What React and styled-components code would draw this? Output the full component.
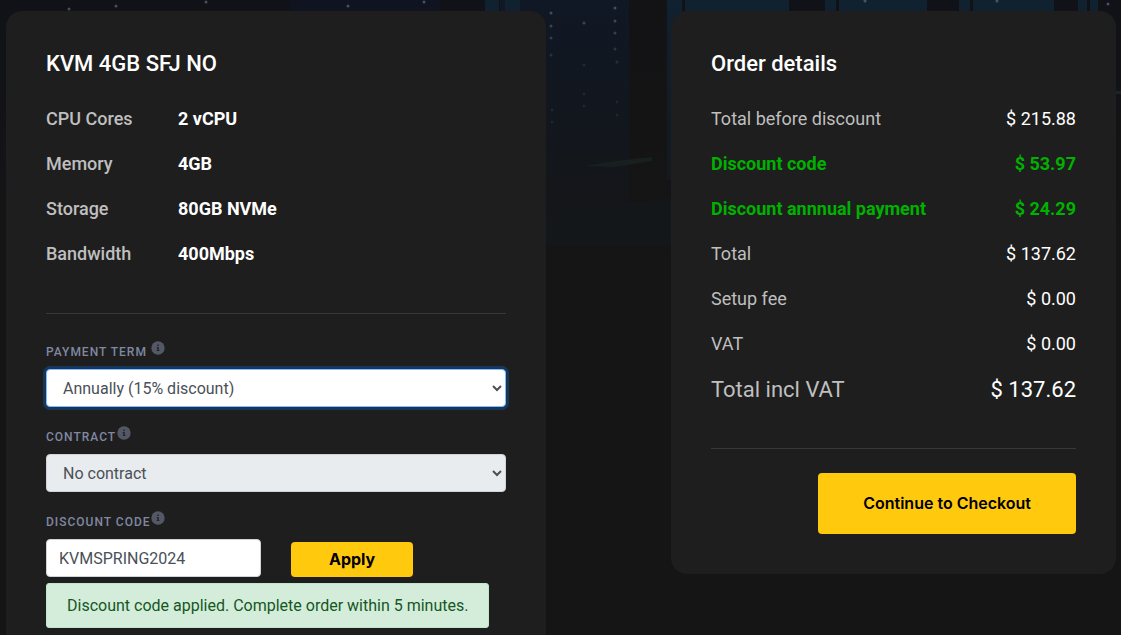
import React from "react";
import styled, { createGlobalStyle } from "styled-components";

const GlobalStyle = createGlobalStyle`
  *, *::before, *::after { box-sizing: border-box; }
  html, body, #root { min-height: 100vh; }
  body { margin: 0; background: #151515; font-family: Roboto, sans-serif; color: #fff; }
  button, input, select { font: inherit; }
`;

const Page = styled.div`
  position: relative;
  height: 100vh;
  overflow: hidden;
`;

const Backdrop = styled.svg`
  position: absolute;
  inset: 0;
  width: 100%;
  height: 100%;
`;

const Columns = styled.main`
  position: relative;
  display: grid;
  grid-template-columns: 540fr 445fr;
  column-gap: 125px;
  align-items: start;
  padding: 11px 5px 0 6px;
`;

const Panel = styled.section`
  background: #1e1e1e;
  border-radius: 16px;
  padding: 40px;
`;

const Title = styled.h2`
  margin: 0 0 30px;
  font-size: 22px;
  line-height: 26px;
  font-weight: 500;
`;

const SpecList = styled.dl`
  display: grid;
  grid-template-columns: 132px 1fr;
  row-gap: 21px;
  margin: 0;
  font-size: 18px;
  line-height: 24px;
`;

const SpecName = styled.dt`
  font-weight: 500;
  color: #bfbfbf;
`;

const SpecValue = styled.dd`
  margin: 0;
  font-weight: 700;
`;

const Divider = styled.hr`
  height: 1px;
  margin: ${(p) => p.$top}px 0 24px;
  border: 0;
  background: #383838;
`;

const Field = styled.div`
  display: flex;
  flex-direction: column;
  margin-bottom: 16px;
`;

const LabelRow = styled.div`
  display: flex;
  gap: ${(p) => p.$gap || 0}px;
  height: 31px;
`;

const Label = styled.label`
  padding-top: 4px;
  font-size: 12px;
  line-height: 20px;
  font-weight: 500;
  letter-spacing: 1px;
  text-transform: uppercase;
  color: #8088a2;
`;

const Info = styled.svg`
  width: 14px;
  height: 14px;
  margin-top: 3px;
`;

const Select = styled.select`
  height: 38px;
  padding: 0 0 0 12px;
  border: 1px solid ${(p) => (p.$active ? "#80bdff" : "#ced4da")};
  border-radius: 4px;
  background: ${(p) => (p.$active ? "#fff" : "#e9ecef")};
  box-shadow: ${(p) => (p.$active ? "0 0 0 3px #17365a" : "none")};
  color: #495057;
  font-size: 16px;
  opacity: 1;
`;

const CodeRow = styled.div`
  display: flex;
  align-items: flex-end;
  gap: 30px;
`;

const CodeInput = styled.input`
  width: 215px;
  height: 38px;
  padding: 0 12px;
  border: 1px solid #ced4da;
  border-radius: 4px;
  background: #fff;
  color: #495057;
  font-size: 16px;
`;

const Button = styled.button`
  padding: ${(p) => (p.$large ? "20px 45px" : "7px 38px")};
  border: 0;
  border-radius: 4px;
  background: #ffc90e;
  color: #000;
  font-family: Inter, sans-serif;
  font-size: 16px;
  line-height: 21px;
  font-weight: ${(p) => (p.$large ? 600 : 700)};
  white-space: nowrap;
`;

const Notice = styled.p`
  align-self: flex-start;
  margin: 6px 0 0;
  padding: 10px 20px;
  border: 1px solid #c3e6cb;
  border-radius: 3px;
  background: #d4edda;
  color: #155724;
  font-size: 16px;
  line-height: 23px;
`;

const Lines = styled.dl`
  display: flex;
  flex-direction: column;
  gap: 21px;
  margin: 0;
`;

const Line = styled.div`
  display: flex;
  justify-content: space-between;
  font-size: ${(p) => (p.$grand ? 22 : 18)}px;
  line-height: ${(p) => (p.$grand ? 26 : 24)}px;
  font-weight: ${(p) => (p.$saving ? 700 : 400)};
  color: ${(p) => (p.$saving ? "#00b100" : "#bfbfbf")};
`;

const Amount = styled.dd`
  margin: 0;
  color: ${(p) => (p.$saving ? "#00b100" : "#fff")};
`;

const Actions = styled.div`
  display: flex;
  justify-content: flex-end;
`;

const InfoIcon = () => (
  <Info viewBox="0 0 14 14" aria-hidden="true">
    <circle cx="7" cy="7" r="6.7" fill="#545866" />
    <path d="M6.3 3.6h1.5v1.4H6.3zM5.7 6h2.1v3.1h.6v1H5.7v-1h.6V7h-.6z" fill="#23252b" />
  </Info>
);

const specs = [
  ["CPU Cores", "2 vCPU"],
  ["Memory", "4GB"],
  ["Storage", "80GB NVMe"],
  ["Bandwidth", "400Mbps"],
];

const lines = [
  { name: "Total before discount", amount: "$ 215.88" },
  { name: "Discount code", amount: "$ 53.97", saving: true },
  { name: "Discount annnual payment", amount: "$ 24.29", saving: true },
  { name: "Total", amount: "$ 137.62" },
  { name: "Setup fee", amount: "$ 0.00" },
  { name: "VAT", amount: "$ 0.00" },
  { name: "Total incl VAT", amount: "$ 137.62", grand: true },
];

const lights = [
  [69, 9], [116, 6], [206, 2], [348, 6], [424, 2],
  [551, 13], [551, 26], [551, 38], [551, 55], [584, 23], [615, 8], [615, 21],
  [615, 33], [615, 49], [617, 62], [584, 65], [584, 94], [584, 106],
  [552, 110], [552, 122], [617, 102], [617, 115], [865, 1], [997, 1], [1108, 4],
];

const racks = [
  [485, 14], [505, 15], [667, 15], [685, 104], [825, 11], [839, 88], [959, 11],
  [973, 81], [1078, 9], [1090, 8],
];

const ServerRoom = () => (
  <Backdrop viewBox="0 0 1121 635" preserveAspectRatio="xMidYMin slice" aria-hidden="true">
    <defs>
      <linearGradient id="fade" x1="0" y1="0" x2="0" y2="1">
        <stop offset="0" stopColor="#151515" stopOpacity="0" />
        <stop offset="1" stopColor="#151515" />
      </linearGradient>
    </defs>
    <rect width="1121" height="260" fill="#111217" />
    <rect x="290" width="150" height="200" fill="#101420" />
    <rect x="500" width="129" height="230" fill="#101825" />
    <rect x="629" width="38" height="260" fill="#131315" />
    {racks.map(([x, w]) => (
      <rect key={x} x={x} width={w} height="180" fill="#102130" />
    ))}
    <rect width="1121" height="260" fill="url(#fade)" />
    <path d="M546 214L671 198V246H546Z" fill="#14171a" />
    <path d="M584 166L615 161L652 157L652 161L615 167Z" fill="#18201f" />
    {lights.map(([x, y]) => (
      <circle key={`${x}-${y}`} cx={x} cy={y} r="1.5" fill="#55656e" opacity={Math.max(0.2, 0.8 - y / 120)} />
    ))}
    <rect x="1116" y="91" width="5" height="3" fill="#1a2525" />
  </Backdrop>
);

export default function App() {
  return (
    <>
      <GlobalStyle />
      <Page>
        <ServerRoom />
        <Columns>
          <Panel>
            <Title>KVM 4GB SFJ NO</Title>
            <SpecList>
              {specs.map(([name, value]) => (
                <React.Fragment key={name}>
                  <SpecName>{name}</SpecName>
                  <SpecValue>{value}</SpecValue>
                </React.Fragment>
              ))}
            </SpecList>
            <Divider $top={47} />
            <Field>
              <LabelRow $gap={4}>
                <Label htmlFor="term">Payment term</Label>
                <InfoIcon />
              </LabelRow>
              <Select id="term" $active>
                <option>Annually (15% discount)</option>
              </Select>
            </Field>
            <Field>
              <LabelRow $gap={1}>
                <Label htmlFor="contract">Contract</Label>
                <InfoIcon />
              </LabelRow>
              <Select id="contract">
                <option>No contract</option>
              </Select>
            </Field>
            <Field>
              <LabelRow>
                <Label htmlFor="code">Discount code</Label>
                <InfoIcon />
              </LabelRow>
              <CodeRow>
                <CodeInput id="code" type="text" defaultValue="KVMSPRING2024" />
                <Button type="button">Apply</Button>
              </CodeRow>
              <Notice role="status">Discount code applied. Complete order within 5 minutes.</Notice>
            </Field>
          </Panel>
          <Panel>
            <Title>Order details</Title>
            <Lines>
              {lines.map(({ name, amount, saving, grand }) => (
                <Line key={name} $saving={saving} $grand={grand}>
                  <dt>{name}</dt>
                  <Amount $saving={saving}>{amount}</Amount>
                </Line>
              ))}
            </Lines>
            <Divider $top={45} />
            <Actions>
              <Button type="button" $large>Continue to Checkout</Button>
            </Actions>
          </Panel>
        </Columns>
      </Page>
    </>
  );
}
